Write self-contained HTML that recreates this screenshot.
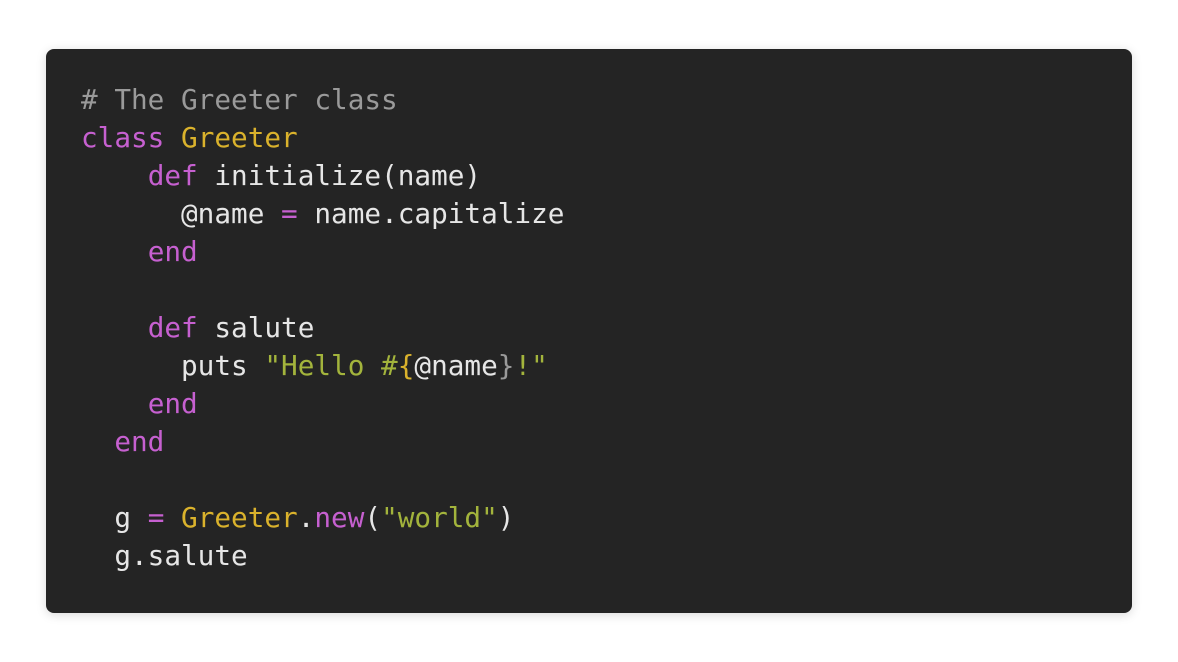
<!DOCTYPE html>
<html><head><style>
html,body{margin:0;padding:0;background:#fff;width:1178px;height:662px;overflow:hidden}
.box{position:absolute;left:46px;top:49px;width:1086px;height:564px;background:#242424;border-radius:8px;box-shadow:0 2px 10px rgba(0,0,0,0.15)}
pre{margin:0;position:absolute;left:35px;top:32px;font-family:"DejaVu Sans Mono","Liberation Mono",monospace;font-size:27.7px;line-height:38px;color:#e6e6e6;white-space:pre}
.c{color:#9a9a9a}.k{color:#c660d0}.y{color:#dab22c}.s{color:#a3b43c}
</style></head><body>
<div class="box"><pre><span class="c"># The Greeter class</span>
<span class="k">class</span> <span class="y">Greeter</span>
    <span class="k">def</span> initialize(name)
      @name <span class="k">=</span> name.capitalize
    <span class="k">end</span>

    <span class="k">def</span> salute
      puts <span class="s">"Hello #</span><span class="y">{</span>@name<span class="c">}</span><span class="s">!"</span>
    <span class="k">end</span>
  <span class="k">end</span>

  g <span class="k">=</span> <span class="y">Greeter</span>.<span class="k">new</span>(<span class="s">"world"</span>)
  g.salute</pre></div>
</body></html>
